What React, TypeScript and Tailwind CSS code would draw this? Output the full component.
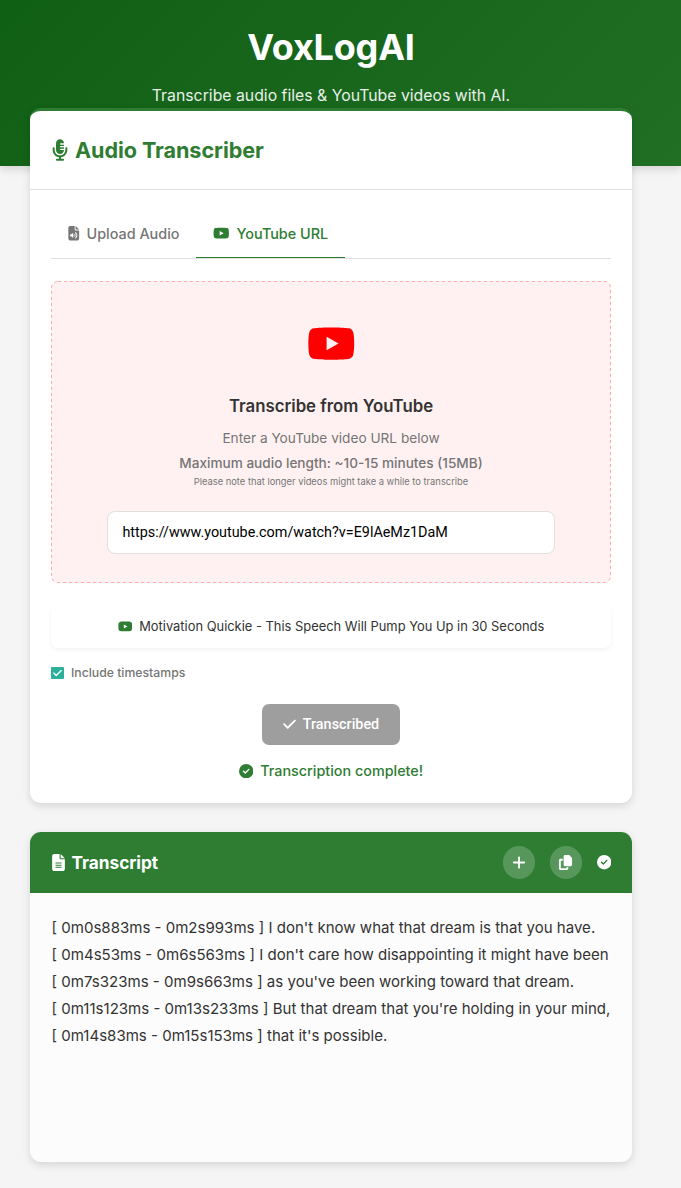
import type { ReactNode } from "react";
import {
  FaCheck,
  FaCircleCheck,
  FaCopy,
  FaFileAudio,
  FaFileLines,
  FaMicrophoneLines,
  FaPlus,
  FaYoutube,
} from "react-icons/fa6";

const lines = [
  "[ 0m0s883ms - 0m2s993ms ] I don't know what that dream is that you have.",
  "[ 0m4s53ms - 0m6s563ms ] I don't care how disappointing it might have been",
  "[ 0m7s323ms - 0m9s663ms ] as you've been working toward that dream.",
  "[ 0m11s123ms - 0m13s233ms ] But that dream that you're holding in your mind,",
  "[ 0m14s83ms - 0m15s153ms ] that it's possible.",
];

function RoundButton({ label, children }: { label: string; children: ReactNode }) {
  return (
    <button
      aria-label={label}
      className="flex h-[33px] w-[32.5px] items-center justify-center rounded-full bg-white/20"
    >
      {children}
    </button>
  );
}

function Header() {
  return (
    <header className="flex h-[166px] flex-col items-center bg-linear-135 from-[#0f5f14] to-[#216f25] pt-[22px] pr-[19px] text-white shadow-[0_4px_8px_rgba(0,0,0,0.12)]">
      <h1 className="text-[36px] leading-[50px] font-bold tracking-[-0.2px]">VoxLogAI</h1>
      <p className="mt-[11px] text-[15.8px] leading-[26px] opacity-90">
        Transcribe audio files &amp; YouTube videos with AI.
      </p>
    </header>
  );
}

function Tabs() {
  return (
    <div className="flex h-[50px] border-b border-[#e0e0e0] text-[14.4px] font-medium">
      <button className="flex h-[49px] w-[145px] items-center pl-[17px] text-[#757575]">
        <FaFileAudio className="mr-[7px] h-[14.4px] w-[11.5px]" />
        Upload Audio
      </button>
      <button className="flex h-[49px] w-[149px] items-center border-b border-[#2e7d32] pt-px pl-[17px] text-[#2e7d32]">
        <FaYoutube className="mr-[7px] w-[16.5px]" />
        YouTube URL
      </button>
    </div>
  );
}

function YouTubePanel() {
  return (
    <div className="relative mt-[22px] flex h-[302px] flex-col items-center rounded-[7px] bg-[#fff1f1] pt-[41px] text-[#757575]">
      <svg className="pointer-events-none absolute inset-0 h-full w-full" viewBox="0 0 560 302" fill="none">
        <rect x="0.5" y="0.5" width="559" height="301" rx="6.5" stroke="#ffa6a6" strokeDasharray="2.8 3.2" />
      </svg>
      <FaYoutube className="h-[43px] w-[48.6px] text-[#ff0000]" />
      <h3 className="mt-[28px] text-[16.8px] leading-[26px] font-semibold text-[#333333]">
        Transcribe from YouTube
      </h3>
      <p className="mt-[7px] text-[13.65px] leading-[24px]">Enter a YouTube video URL below</p>
      <p className="mt-px text-[13.6px] leading-[24px] font-medium">
        Maximum audio length: ~10-15 minutes (15MB)
      </p>
      <p className="text-[9.36px] leading-[14px]">
        Please note that longer videos might take a while to transcribe
      </p>
      <input
        aria-label="YouTube URL"
        readOnly
        value="https://www.youtube.com/watch?v=E9lAeMz1DaM"
        className="mt-[22px] h-[43px] w-[448px] rounded-[8px] border border-[#e0e0e0] bg-white px-[14.4px] font-[Roboto] text-[14.36px] text-black outline-none"
      />
    </div>
  );
}

export default function App() {
  return (
    <div className="h-[1188px] bg-[#f5f5f5] font-[Inter,sans-serif] text-[#333333]">
      <Header />
      <main className="relative mt-[-58px] ml-[30px] w-[602px]">
        <section className="h-[695px] rounded-[11px] border-t-[3px] border-[#2e7d32] bg-white shadow-[0_3px_8px_rgba(0,0,0,0.13)]">
          <h2 className="flex h-[79px] items-center border-b border-[#e0e0e0] pl-[22px] text-[21.6px] font-bold tracking-[-0.07px] text-[#2e7d32]">
            <FaMicrophoneLines className="mr-[7px] h-[22px] w-[16px]" />
            Audio Transcriber
          </h2>
          <div className="px-[21px] pt-[19px]">
            <Tabs />
            <YouTubePanel />
            <div className="mt-[22px] flex h-[43px] items-center justify-center rounded-[7px] bg-white text-[12.9px] shadow-[0_2px_4px_rgba(0,0,0,0.05)]">
              <FaYoutube className="mr-[7px] w-[14.5px] text-[#2e7d32]" />
              Motivation Quickie - This Speech Will Pump You Up in 30 Seconds
            </div>
            <label className="mt-[15px] flex h-[20px] items-center text-[12.24px] font-medium text-[#757575]">
              <span className="mr-[7px] flex h-[12px] w-[13px] items-center justify-center rounded-[1px] bg-[#2bb09a] text-white">
                <FaCheck className="h-[10px] w-[9px]" />
              </span>
              Include timestamps
            </label>
            <button className="mx-auto mt-[21px] flex h-[41px] w-[138px] items-center justify-center rounded-[7px] bg-[#9e9e9e] font-[Roboto] text-[14.4px] font-medium text-white">
              <FaCheck className="mr-[7px] w-[13px]" />
              Transcribed
            </button>
            <p className="mt-[14px] flex h-[24px] items-center justify-center text-[14.36px] font-medium text-[#2e7d32]">
              <FaCircleCheck className="mr-[7px] w-[14.4px]" />
              Transcription complete!
            </p>
          </div>
        </section>

        <section className="mt-[29px] h-[330px] overflow-hidden rounded-[11px] bg-[#fcfcfc] shadow-[0_3px_8px_rgba(0,0,0,0.13)]">
          <div className="flex h-[61px] items-center bg-[#2e7d32] pr-[21px] pl-[21.6px] text-white">
            <FaFileLines className="mr-[7px] h-[17px] w-[13px]" />
            <h2 className="text-[17.28px] font-bold tracking-[-0.05px]">Transcript</h2>
            <div className="ml-auto flex items-center gap-[14.4px]">
              <RoundButton label="New transcript">
                <FaPlus className="h-[15px] w-[14px]" />
              </RoundButton>
              <RoundButton label="Copy transcript">
                <FaCopy className="h-[15px] w-[15px]" />
              </RoundButton>
              <FaCircleCheck className="h-[14.4px] w-[14.4px]" />
            </div>
          </div>
          <div className="pt-[21px] pl-[21.6px] text-[15.04px] leading-[27px] whitespace-nowrap">
            {lines.map((line) => (
              <p key={line}>{line}</p>
            ))}
          </div>
        </section>
      </main>
    </div>
  );
}
